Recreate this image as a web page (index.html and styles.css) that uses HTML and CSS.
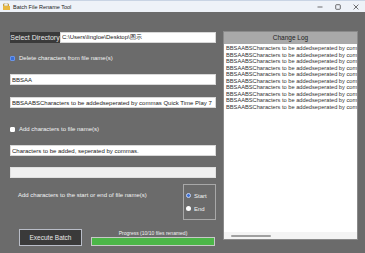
FILE: index.html
```html
<!DOCTYPE html>
<html lang="en">
<head>
    <meta charset="UTF-8">
    <meta name="viewport" content="width=device-width, initial-scale=1.0">
    <title>Batch File Rename Tool</title>
    <link rel="stylesheet" href="styles.css">
</head>
<body>
    <div class="window">
        <div class="titlebar">
            <svg class="app-icon" width="7" height="7" viewBox="0 0 7 7">
                <rect x="0" y="1" width="6" height="5" fill="#d9a93a"/>
                <rect x="1" y="0" width="4" height="3" fill="#f4f0e0" stroke="#8a7a50" stroke-width="0.4"/>
                <rect x="0" y="3" width="7" height="4" fill="#e8b840"/>
            </svg>
            <span class="title">Batch File Rename Tool</span>
            <div class="controls">
                <svg width="6" height="6" viewBox="0 0 6 6"><line x1="0.5" y1="3" x2="5.5" y2="3" stroke="#333" stroke-width="0.7"/></svg>
                <svg width="6" height="6" viewBox="0 0 6 6"><rect x="0.7" y="0.7" width="4.6" height="4.6" rx="0.8" fill="none" stroke="#333" stroke-width="0.7"/></svg>
                <svg width="6" height="6" viewBox="0 0 6 6"><path d="M0.6 0.6 L5.4 5.4 M5.4 0.6 L0.6 5.4" stroke="#333" stroke-width="0.7"/></svg>
            </div>
        </div>

        <div class="content">
            <div class="left">
                <div class="dir-row">
                    <button class="dark-btn select-btn">Select Directory</button>
                    <input class="field dir-field" type="text" value="C:\Users\lingloe\Desktop\图示">
                </div>

                <div class="check-row first-check">
                    <input type="checkbox" id="deleteChars" checked>
                    <label for="deleteChars">Delete characters from file name(s)</label>
                </div>

                <input class="field gap-11" type="text" value="BBSAA">
                <input class="field gap-12" type="text" value="BBSAABSCharacters to be addedseperated by commas Quick Time Play 7">

                <div class="check-row second-check">
                    <input type="checkbox" id="addChars">
                    <label for="addChars">Add characters to file name(s)</label>
                </div>

                <input class="field gap-11" type="text" value="Characters to be added, seperated by commas.">
                <input class="field gap-11 disabled" type="text" disabled>

                <div class="option-row">
                    <span class="option-text">Add characters to the start or end of file name(s)</span>
                    <div class="radio-box">
                        <div class="radio-item">
                            <input type="radio" name="pos" id="posStart" checked>
                            <label for="posStart">Start</label>
                        </div>
                        <div class="radio-item">
                            <input type="radio" name="pos" id="posEnd">
                            <label for="posEnd">End</label>
                        </div>
                    </div>
                </div>

                <div class="bottom-row">
                    <button class="dark-btn execute-btn">Execute Batch</button>
                    <div class="progress">
                        <span class="progress-label">Progress (10/10 files renamed)</span>
                        <div class="progress-bar"><div class="progress-fill" style="width: 100%"></div></div>
                    </div>
                </div>
            </div>

            <div class="log-panel">
                <div class="log-header">Change Log</div>
                <div class="log-list">
                    <div class="log-item">BBSAABSCharacters to be addedseperated by commas</div>
                    <div class="log-item">BBSAABSCharacters to be addedseperated by commas</div>
                    <div class="log-item">BBSAABSCharacters to be addedseperated by commas</div>
                    <div class="log-item">BBSAABSCharacters to be addedseperated by commas</div>
                    <div class="log-item">BBSAABSCharacters to be addedseperated by commas</div>
                    <div class="log-item">BBSAABSCharacters to be addedseperated by commas</div>
                    <div class="log-item">BBSAABSCharacters to be addedseperated by commas</div>
                    <div class="log-item">BBSAABSCharacters to be addedseperated by commas</div>
                    <div class="log-item">BBSAABSCharacters to be addedseperated by commas</div>
                    <div class="log-item">BBSAABSCharacters to be addedseperated by commas</div>
                </div>
                <div class="log-scroll">
                    <div class="log-thumb"></div>
                </div>
            </div>
        </div>
    </div>
</body>
</html>
```

FILE: styles.css
```css
body {
    margin: 0;
    padding: 0;
    font-family: "Liberation Sans", Arial, sans-serif;
    background-color: #6b6b6b;
}

.window {
    width: 365px;
    height: 253px;
    display: flex;
    flex-direction: column;
    background-color: #6b6b6b;
    overflow: hidden;
}

.titlebar {
    height: 12px;
    background-color: #eef2f8;
    border-top: 1px solid #c9d4e4;
    display: flex;
    align-items: center;
    padding-left: 3px;
    box-sizing: border-box;
}

.app-icon {
    margin-right: 3px;
}

.title {
    font-size: 5.5px;
    color: #222;
}

.controls {
    margin-left: auto;
    display: flex;
    gap: 12px;
    margin-right: 6px;
}

.content {
    flex: 1;
    display: flex;
    padding: 20px 0 0 10px;
    gap: 7px;
}

.left {
    width: 206px;
    display: flex;
    flex-direction: column;
}

.dir-row {
    display: flex;
    height: 11px;
}

.dark-btn {
    background-color: #3a3a3a;
    color: #e8e8e8;
    font-family: "Liberation Sans", Arial, sans-serif;
    padding: 0;
    cursor: pointer;
}

.select-btn {
    width: 50px;
    height: 11px;
    border: none;
    font-size: 7px;
}

.field {
    height: 11px;
    box-sizing: border-box;
    border: 1px solid #d8d8d8;
    background-color: #fff;
    font-family: "Liberation Sans", Arial, sans-serif;
    font-size: 6px;
    color: #222;
    padding: 0 1px;
    margin: 0;
    outline: none;
}

.dir-field {
    flex: 1;
}

.gap-11 {
    margin-top: 11px;
}

.gap-12 {
    margin-top: 12px;
}

.disabled {
    background-color: #f0f0f0;
    border-color: #e0e0e0;
}

.check-row {
    height: 10px;
    display: flex;
    align-items: center;
    font-size: 6px;
    color: #f2f2f2;
}

.first-check {
    margin-top: 10px;
}

.second-check {
    margin-top: 16px;
}

.check-row input[type="checkbox"] {
    appearance: none;
    width: 5px;
    height: 5px;
    margin: 0 4px 0 0;
    border: 1px solid #fff;
    background-color: #fff;
    border-radius: 1px;
    box-sizing: border-box;
}

.check-row input[type="checkbox"]:checked {
    background-color: #3b6fd6;
    border-color: #6a95e8;
}

.option-row {
    margin-top: 6px;
    height: 36px;
    display: flex;
}

.option-text {
    font-size: 6px;
    color: #f2f2f2;
    margin: 8px 0 0 8px;
}

.radio-box {
    margin-left: auto;
    width: 33px;
    box-sizing: border-box;
    border: 1px solid #a8a8a8;
    display: flex;
    flex-direction: column;
    justify-content: center;
    gap: 7px;
    padding-left: 2px;
}

.radio-item {
    display: flex;
    align-items: center;
    font-size: 6px;
    color: #f2f2f2;
}

.radio-item input[type="radio"] {
    appearance: none;
    width: 5px;
    height: 5px;
    margin: 0 3px 0 0;
    border-radius: 50%;
    background-color: #fff;
    box-sizing: border-box;
}

.radio-item input[type="radio"]:checked {
    background-color: #3b6fd6;
    border: 1px solid #c8d6f4;
}

.bottom-row {
    margin-top: 9px;
    display: flex;
    align-items: flex-start;
}

.execute-btn {
    margin-left: 9px;
    width: 63px;
    height: 17px;
    border: 1px solid #b9bdc8;
    font-size: 6.5px;
}

.progress {
    margin-left: 9px;
    width: 124px;
    display: flex;
    flex-direction: column;
    align-items: center;
}

.progress-label {
    font-size: 5px;
    color: #f2f2f2;
    height: 8px;
    line-height: 8px;
}

.progress-bar {
    width: 100%;
    height: 9px;
    box-sizing: border-box;
    border: 1px solid #c8c8c8;
    background-color: #e6e6e6;
}

.progress-fill {
    height: 100%;
    background-color: #4cb648;
}

.log-panel {
    width: 135px;
    height: 209px;
    margin-top: -1px;
    display: flex;
    flex-direction: column;
    background-color: #fff;
    border: 1px solid #8a8a8a;
    box-sizing: border-box;
}

.log-header {
    height: 12px;
    background-color: #a9a9a9;
    color: #222;
    font-size: 6.5px;
    text-align: center;
    line-height: 12px;
}

.log-list {
    flex: 1;
    overflow: hidden;
    padding: 1px 0 0 2px;
}

.log-item {
    font-size: 5.7px;
    line-height: 6.5px;
    color: #333;
    white-space: nowrap;
}

.log-scroll {
    height: 7px;
    background-color: #f4f4f4;
    display: flex;
    align-items: center;
}

.log-thumb {
    margin-left: 7px;
    width: 40px;
    height: 2px;
    border-radius: 1px;
    background-color: #a0a0a0;
}
```
